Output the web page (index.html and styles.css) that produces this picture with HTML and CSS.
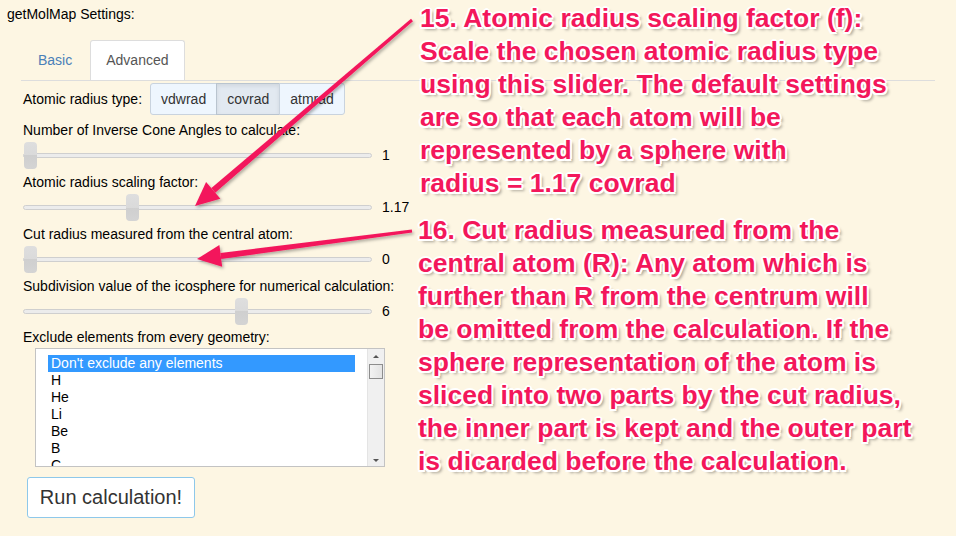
FILE: index.html
```html
<!DOCTYPE html>
<html>
<head>
<meta charset="utf-8">
<link rel="stylesheet" href="styles.css">
</head>
<body>
<div class="page">
  <div class="title">getMolMap Settings:</div>
  <div class="tabs">
    <div class="tab">Basic</div>
    <div class="tab active">Advanced</div>
  </div>
  <div class="content">
    <div class="radius-row">
      <span class="lbl">Atomic radius type:</span>
      <div class="btn-group">
        <div class="gbtn">vdwrad</div>
        <div class="gbtn on">covrad</div>
        <div class="gbtn">atmrad</div>
      </div>
    </div>

    <div class="field">
      <div class="lbl">Number of Inverse Cone Angles to calculate:</div>
      <div class="slider-row">
        <div class="track"><div class="handle" style="left:0px"></div></div>
        <span class="val">1</span>
      </div>
    </div>
    <div class="field">
      <div class="lbl">Atomic radius scaling factor:</div>
      <div class="slider-row">
        <div class="track"><div class="handle" style="left:102px"></div></div>
        <span class="val">1.17</span>
      </div>
    </div>
    <div class="field">
      <div class="lbl">Cut radius measured from the central atom:</div>
      <div class="slider-row">
        <div class="track"><div class="handle" style="left:0px"></div></div>
        <span class="val">0</span>
      </div>
    </div>
    <div class="field">
      <div class="lbl">Subdivision value of the icosphere for numerical calculation:</div>
      <div class="slider-row">
        <div class="track"><div class="handle" style="left:211px"></div></div>
        <span class="val">6</span>
      </div>
    </div>

    <div class="lbl exclude">Exclude elements from every geometry:</div>
    <div class="listbox">
      <div class="items">
        <div class="item sel">Don't exclude any elements</div>
        <div class="item">H</div>
        <div class="item">He</div>
        <div class="item">Li</div>
        <div class="item">Be</div>
        <div class="item">B</div>
        <div class="item">C</div>
      </div>
      <div class="vscroll">
        <svg class="arr" width="16" height="10" viewBox="0 0 16 10"><path d="M5 7 L8 4 L11 7 Z" fill="#555"/></svg>
        <div class="thumb"></div>
        <div class="vspace"></div>
        <svg class="arr" width="16" height="10" viewBox="0 0 16 10"><path d="M5 3 L8 6 L11 3 Z" fill="#555"/></svg>
      </div>
    </div>
    <button class="run">Run calculation!</button>
  </div>

  <svg class="arrows" width="956" height="536" viewBox="0 0 956 536">
    <defs>
      <filter id="sh" x="-10%" y="-10%" width="130%" height="130%">
        <feDropShadow dx="1.5" dy="2" stdDeviation="1.5" flood-color="#000" flood-opacity="0.3"/>
      </filter>
    </defs>
    <g fill="#f3175b" filter="url(#sh)">
      <polygon points="412.97,21.14 411.03,18.86 211.4,188.1 215.2,192.7"/>
      <polygon points="195,206 220.4,198.8 206.1,182.0"/>
      <polygon points="412.19,232.49 411.81,229.51 220.4,252.9 221.2,258.9"/>
      <polygon points="197,259 222.2,266.8 219.4,245.0"/>
    </g>
  </svg>

  <div class="note n15">15. Atomic radius scaling factor (f):<br>Scale the chosen atomic radius type<br>using this slider. The default settings<br>are so that each atom will be<br>represented by a sphere with<br>radius = 1.17 covrad</div>
  <div class="note n16">16. Cut radius measured from the<br>central atom (R): Any atom which is<br>further than R from the centrum will<br>be omitted from the calculation. If the<br>sphere representation of the atom is<br>sliced into two parts by the cut radius,<br>the inner part is kept and the outer part<br>is dicarded before the calculation.</div>
</div>
</body>
</html>
```

FILE: styles.css
```css
html, body {
  margin: 0;
  padding: 0;
}
body {
  background: #fdf6e3;
  font-family: "Liberation Sans", Arial, sans-serif;
  font-size: 14px;
  color: #000;
}
.page {
  position: relative;
  width: 956px;
  height: 536px;
  overflow: hidden;
}
.title {
  padding: 6px 0 0 7px;
  height: 40px;
  line-height: 16px;
  box-sizing: border-box;
}
.tabs {
  display: flex;
  margin-left: 21px;
  width: 914px;
  padding-left: 1px;
  border-bottom: 1px solid #ddd;
  box-sizing: border-box;
  height: 41px;
}
.tab {
  font-size: 14px;
  line-height: 20px;
  padding: 9px 15px 10px;
  border: 1px solid transparent;
  border-bottom: none;
  margin-right: 2px;
  color: #4a80b8;
  border-radius: 3px 3px 0 0;
}
.tab.active {
  background: #fff;
  border-color: #ddd;
  color: #555;
  height: 40px;
  box-sizing: border-box;
}
.content {
  padding-left: 23px;
}
.radius-row {
  display: flex;
  align-items: center;
  gap: 8px;
  margin-top: 2px;
  height: 32px;
}
.lbl {
  line-height: 16px;
  white-space: nowrap;
}
.btn-group {
  display: flex;
  height: 32px;
}
.gbtn {
  height: 32px;
  box-sizing: border-box;
  border: 1px solid #c9d3de;
  background: #eef6fe;
  color: #333;
  font-size: 14px;
  line-height: 30px;
  padding: 0 10px;
  margin-left: -1px;
}
.gbtn:first-child {
  margin-left: 0;
  border-radius: 3px 0 0 3px;
}
.gbtn:last-child {
  border-radius: 0 3px 3px 0;
}
.gbtn.on {
  background: #e2e9f1;
  border-color: #b9c4cf;
  box-shadow: inset 0 2px 4px rgba(0,0,0,0.08);
}
.field {
  display: flex;
  flex-direction: column;
  gap: 3px;
  margin-top: 7px;
}
.field + .field {
  margin-top: 5px;
}
.slider-row {
  display: flex;
  align-items: center;
  height: 28px;
}
.track {
  position: relative;
  width: 349px;
  height: 5px;
  box-sizing: border-box;
  border: 1px solid #cfcfcf;
  background: #ececec;
  border-radius: 3px;
}
.handle {
  position: absolute;
  top: -12px;
  width: 13px;
  height: 27px;
  box-sizing: border-box;
  border-radius: 4px;
  background: linear-gradient(#dedede 0%, #dadada 50%, #cfcfcf 50%, #d4d4d4 100%);
}
.val {
  margin-left: 10px;
  line-height: 16px;
}
.exclude {
  margin-top: 4px;
}
.listbox {
  display: flex;
  margin: 3px 0 0 12px;
  width: 350px;
  height: 119px;
  box-sizing: border-box;
  border: 1px solid #c3c3c3;
  background: #fff;
  overflow: hidden;
}
.items {
  flex: 1;
  padding: 6px 12px 0 12px;
  overflow: hidden;
}
.item {
  height: 17px;
  line-height: 17px;
  padding-left: 3px;
}
.item.sel {
  background: #3399ff;
  color: #fff;
}
.vscroll {
  width: 16px;
  background: #f0f0f0;
  border-left: 1px solid #e4e4e4;
  display: flex;
  flex-direction: column;
  align-items: center;
  padding-top: 2px;
}
.arr {
  display: block;
  flex: none;
}
.thumb {
  width: 14px;
  height: 15px;
  box-sizing: border-box;
  border: 1px solid #8d8d8d;
  background: linear-gradient(90deg, #f3f3f3, #e3e3e3);
  margin-top: 3px;
}
.vspace {
  flex: 1;
}
.run {
  display: block;
  margin: 10px 0 0 4px;
  width: 168px;
  height: 41px;
  background: #fff;
  border: 1px solid #8ec8ea;
  border-radius: 3px;
  font-family: "Liberation Sans", Arial, sans-serif;
  font-size: 20px;
  color: #333;
  padding: 0;
}
.arrows {
  position: absolute;
  left: 0;
  top: 0;
  pointer-events: none;
}
.note {
  position: absolute;
  left: 420px;
  font-weight: bold;
  font-size: 26.5px;
  line-height: 33px;
  color: #f3175b;
  white-space: nowrap;
  text-shadow:
    2px 0 0 #fff, -2px 0 0 #fff, 0 2px 0 #fff, 0 -2px 0 #fff,
    1.5px 1.5px 0 #fff, -1.5px 1.5px 0 #fff, 1.5px -1.5px 0 #fff, -1.5px -1.5px 0 #fff,
    3px 3px 3px rgba(0,0,0,0.35);
}
.n15 {
  top: 2px;
}
.n16 {
  top: 214px;
  left: 418px;
}
```
